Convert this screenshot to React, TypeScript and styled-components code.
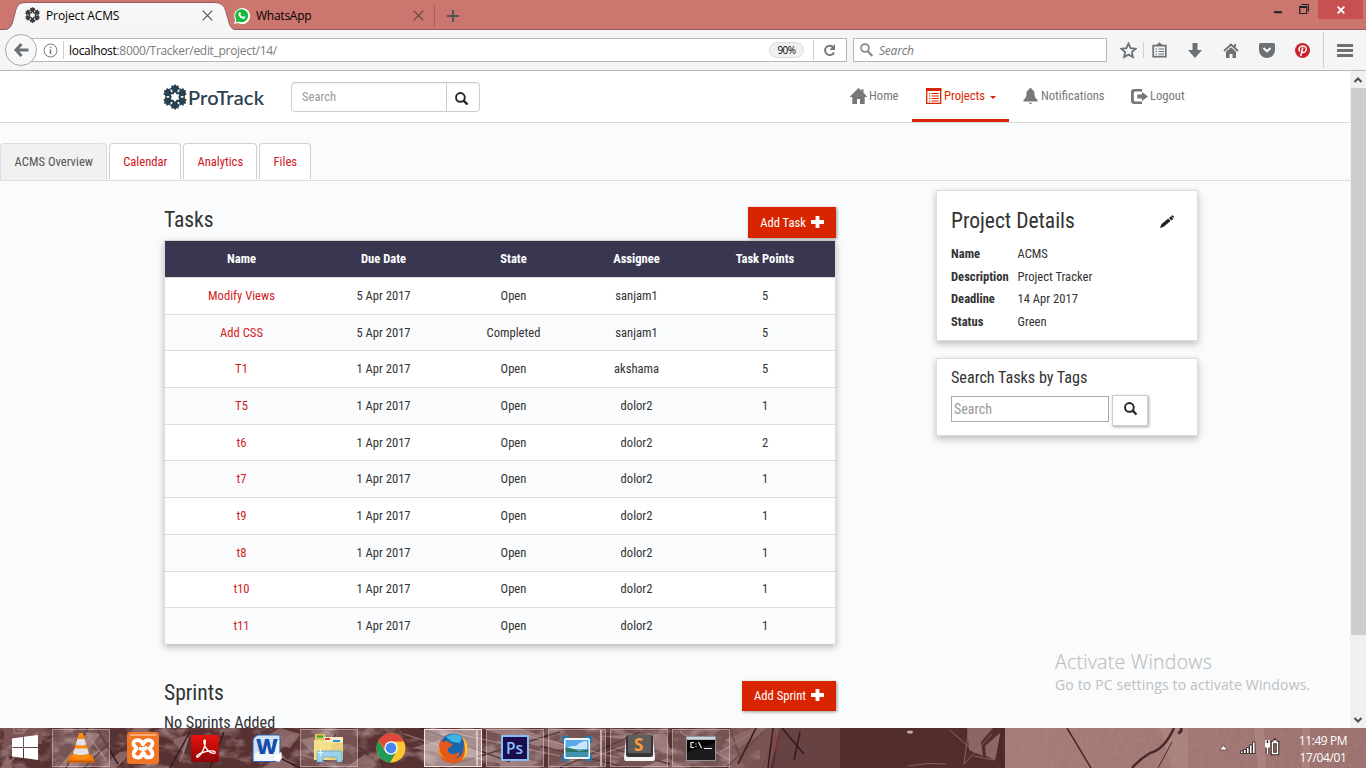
import React from 'react';
import styled, { createGlobalStyle, css } from 'styled-components';

const GlobalStyle = createGlobalStyle`
  *, *::before, *::after { box-sizing: border-box; }
  body { margin: 0; background: #fafbfd; overflow: hidden; }
`;

const condensed = css`font-family: 'Roboto Condensed', 'Roboto', sans-serif; font-stretch: condensed;`;
const system = css`font-family: 'Open Sans', 'Noto Sans', sans-serif; font-stretch: normal;`;

const Screen = styled.div`
  width: 1366px;
  height: 768px;
  display: grid;
  grid-template-rows: 30px 41px 657px 40px;
  overflow: hidden;
`;

/* ---------- Browser chrome ---------- */
const TitleBar = styled.header`
  ${system}
  position: relative;
  display: flex;
  align-items: flex-start;
  background: #cc7670;
  border-bottom: 1px solid #9c5960;
  font-size: 12px;
  color: #000;
`;
const TabShape = styled.svg`
  position: absolute;
  left: 0;
  top: 0;
`;
const BrowserTab = styled.div<{ $w: number; $pl: number }>`
  position: relative;
  display: flex;
  align-items: center;
  width: ${p => p.$w}px;
  height: 31px;
  padding-left: ${p => p.$pl}px;
`;
const TabLabel = styled.span<{ $w: number; $ml: number; $ls?: number }>`
  width: ${p => p.$w}px;
  margin-left: ${p => p.$ml}px;
  letter-spacing: ${p => p.$ls || 0}px;
  white-space: nowrap;
`;
const NewTab = styled.div`
  display: flex;
  align-items: center;
  height: 22px;
  margin-top: 5px;
  padding-left: 12px;
  border-left: 1px solid #a9605f;
`;
const WindowButtons = styled.div`
  display: flex;
  margin-left: auto;
  margin-right: 3px;
`;
const CloseWindow = styled.div`
  width: 45px;
  height: 19px;
  margin-left: 9px;
  background: #c75050;
  display: flex;
  align-items: center;
  justify-content: center;
`;
const Toolbar = styled.div`
  ${system}
  display: flex;
  align-items: center;
  background: #f5f5f5;
  border-bottom: 1px solid #b9b9b9;
  padding-left: 5px;
  font-size: 12px;
`;
const BackButton = styled.div`
  position: relative;
  z-index: 1;
  width: 32px;
  height: 32px;
  border: 1px solid #a2abb5;
  border-radius: 50%;
  background: #f8f8f8;
  display: flex;
  align-items: center;
  justify-content: center;
`;
const Field = styled.div<{ $w: number; $ml: number; $pl: number }>`
  display: flex;
  align-items: center;
  width: ${p => p.$w}px;
  height: 24px;
  margin-left: ${p => p.$ml}px;
  padding-left: ${p => p.$pl}px;
  background: #fff;
  border: 1px solid #b1bac4;
`;
const Divider = styled.i<{ $h: number; $ml: number; $mr?: number }>`
  width: 1px;
  height: ${p => p.$h}px;
  margin-left: ${p => p.$ml}px;
  margin-right: ${p => p.$mr || 0}px;
  background: #cfcfcf;
`;
const Url = styled.span`
  width: 700px;
  color: #7c7c7c;
  letter-spacing: -0.31px;
  b { font-weight: 400; color: #000; }
`;
const ZoomBadge = styled.span`
  flex: none;
  width: 35px;
  height: 16px;
  border: 1px solid #dcdcdc;
  border-radius: 8px;
  background: #f0f0f0;
  font-size: 10px;
  line-height: 14px;
  letter-spacing: -0.5px;
  text-align: center;
  color: #000;
`;
const SearchHint = styled.em`
  margin-left: 6px;
  color: #757575;
  letter-spacing: -0.2px;
`;
const ToolIcons = styled.div`
  display: flex;
  align-items: center;
  margin-left: 12px;
`;
const ToolIcon = styled.span<{ $w?: number }>`
  width: ${p => p.$w || 36}px;
  height: 18px;
  display: flex;
  align-items: center;
  justify-content: center;
`;

/* ---------- Page ---------- */
const Viewport = styled.div`
  display: grid;
  grid-template-columns: 1350px 16px;
  overflow: hidden;
`;
const Page = styled.div`
  ${condensed}
  position: relative;
  background: #fafbfd;
  color: #333;
  font-size: 12.6px;
  overflow: hidden;
`;
const Navbar = styled.nav`
  display: flex;
  height: 52px;
  padding-left: 163px;
  background: #fff;
  border-bottom: 1px solid #d9d9d9;
`;
const Brand = styled.div`
  display: flex;
  align-items: center;
  width: 128px;
  height: 52px;
  font: 500 20px/24px Lato, sans-serif;
  font-stretch: normal;
  color: #284050;
  span { margin: -1px 0 0 1px; letter-spacing: 0.2px; -webkit-text-stroke: 0.1px #284050; }
`;
const NavSearch = styled.div`
  display: flex;
  width: 189px;
  height: 30px;
  margin-top: 11px;
  border: 1px solid #ccc;
  border-radius: 3.6px;
  color: #999;
  line-height: 28px;
  box-shadow: inset 0 1px 1px rgba(0, 0, 0, 0.06);
`;
const NavSearchInput = styled.span`
  width: 155px;
  padding-left: 10px;
  border-right: 1px solid #ccc;
`;
const NavSearchButton = styled.span`
  display: flex;
  flex: 1;
  align-items: center;
  justify-content: center;
  padding: 3px 2px 0 0;
`;
const NavLinks = styled.div`
  display: flex;
  margin-left: 357px;
`;
const NavLink = styled.a<{ $w: number; $pl?: number; $active?: boolean }>`
  display: flex;
  align-items: center;
  width: ${p => p.$w}px;
  height: 51px;
  padding-left: ${p => p.$pl ?? 13}px;
  padding-top: ${p => (p.$active ? 3 : 0)}px;
  border-bottom: ${p => (p.$active ? '3px solid #d92400' : '0')};
  color: ${p => (p.$active ? '#d92400' : '#777')};
  svg { flex: none; margin-top: -1px; }
  span { margin: -2px 0 0 2px; }
`;
const Caret = styled.i`
  margin: 2px 0 0 5px;
  border: 3.5px solid transparent;
  border-top-color: #d92400;
  border-bottom: 0;
`;
const PageTabs = styled.div`
  display: flex;
  gap: 2px;
  height: 58px;
  padding-top: 20px;
  border-bottom: 1px solid #ddd;
`;
const PageTab = styled.a<{ $w: number; $active?: boolean }>`
  width: ${p => p.$w}px;
  height: ${p => (p.$active ? 37 : 36)}px;
  border: 1px solid ${p => (p.$active ? '#ddd' : '#d3d0d0')};
  border-bottom: 0;
  border-radius: 4px 4px 0 0;
  background: ${p => (p.$active ? '#f1f1f1' : '#fff')};
  color: ${p => (p.$active ? '#555' : '#d0141e')};
  line-height: 36px;
  padding-left: 0.6px;
  text-align: center;
`;
const Columns = styled.div`
  display: flex;
  padding-left: 164px;
`;
const MainColumn = styled.main`
  width: 672px;
  padding-top: 26px;
`;
const SectionHead = styled.div`
  display: flex;
  align-items: flex-start;
  justify-content: space-between;
`;
const Heading = styled.h3`
  margin: 0;
  font-size: 21.6px;
  font-weight: 400;
  line-height: 26px;
  letter-spacing: -0.04px;
`;
const SubHeading = styled.h4`
  margin: 0;
  font-size: 16.2px;
  font-weight: 400;
  line-height: 20px;
  letter-spacing: -0.03px;
`;
const AddButton = styled.button<{ $w: number; $h?: number }>`
  ${condensed}
  display: flex;
  align-items: center;
  justify-content: center;
  gap: 5px;
  width: ${p => p.$w}px;
  height: ${p => p.$h || 31}px;
  padding: 0;
  border: 0;
  background: #d92400;
  color: #fff;
  font-size: 12.6px;
  box-shadow: 1px 1px 3px rgba(0, 0, 0, 0.4);
  svg { margin-top: -1px; }
`;
const TaskTable = styled.table`
  width: 672px;
  margin-top: 2px;
  table-layout: fixed;
  border-collapse: separate;
  border-spacing: 0;
  text-align: center;
  box-shadow: 0 3px 7px rgba(0, 0, 0, 0.27);
  border: 1px solid #ddd;
  border-top-color: #d5d5d8;
  border-bottom: 0;
`;
const HeadCell = styled.th<{ $w: number }>`
  width: ${p => p.$w}px;
  height: 36px;
  padding: 0 0 2px;
  background: #39374f;
  color: #fff;
  font-weight: 700;
`;
const Cell = styled.td<{ $color?: string }>`
  height: 36.7px;
  padding: 0 0 1px;
  border-top: 1px solid #ddd;
  color: ${p => p.$color || '#333'};
`;
const BodyRow = styled.tr`
  background: #fff;
  &:nth-child(even) { background: #fafbfd; }
`;
const Sprints = styled.section`
  margin-top: 37px;
  ${Heading} { line-height: 24px; }
  ${SubHeading} { margin-top: 2px; }
`;
const Sidebar = styled.aside`
  width: 262px;
  margin-left: 100px;
  padding-top: 9px;
`;
const Panel = styled.section<{ $h: number; $pt: number }>`
  height: ${p => p.$h}px;
  margin-bottom: 17px;
  padding: ${p => p.$pt}px 14px 0;
  background: #fff;
  border: 1px solid #ddd;
  box-shadow: 0 3px 7px rgba(0, 0, 0, 0.25);
`;
const PanelHead = styled.div`
  display: flex;
  align-items: center;
  justify-content: space-between;
  padding-right: 9px;
`;
const Details = styled.dl`
  display: grid;
  grid-template-columns: 66.5px 1fr;
  grid-auto-rows: 22.6px;
  align-items: center;
  margin: 8.2px 0 0;
  dt { font-weight: 700; }
  dd { margin: 0; }
`;
const TagSearch = styled.div`
  display: flex;
  gap: 3px;
  margin-top: 7px;
`;
const TagInput = styled.div`
  width: 158px;
  height: 26px;
  margin-top: 1px;
  padding-left: 2px;
  border: 1px solid #a9a9a9;
  color: #999;
  font-size: 14px;
  line-height: 24px;
`;
const TagButton = styled.div`
  display: flex;
  align-items: center;
  justify-content: center;
  width: 36px;
  height: 31px;
  padding: 0 0 3px 1px;
  border: 1px solid #ccc;
  background: #fff;
  box-shadow: 1px 1px 3px rgba(0, 0, 0, 0.35);
`;
const Watermark = styled.div`
  ${system}
  position: absolute;
  left: 1055px;
  top: 577px;
  color: #bdbfc0;
  white-space: nowrap;
`;
const WatermarkTitle = styled.div`
  font-size: 19.5px;
  line-height: 28px;
  font-weight: 300;
  letter-spacing: 0.25px;
  -webkit-text-stroke: 0.2px #bdbfc0;
`;
const WatermarkText = styled.div`
  font-size: 14px;
  line-height: 18px;
  letter-spacing: 0.16px;
`;
const Scrollbar = styled.div`
  display: flex;
  flex-direction: column;
  align-items: center;
  background: #f0f0f0;
`;
const Thumb = styled.div`
  width: 15px;
  height: 547px;
  margin-bottom: auto;
  background: #cdcdcd;
`;
const Arrow = styled.svg`
  width: 16px;
  height: 17px;
  flex: none;
`;

/* ---------- Taskbar ---------- */
const TaskbarRoot = styled.footer`
  ${system}
  position: relative;
  display: flex;
  overflow: hidden;
  background: #5a3535;
  color: #fff;
`;
const Wallpaper = styled.svg`
  position: absolute;
  inset: 0;
`;
const StartButton = styled.div`
  position: relative;
  width: 50px;
  padding: 7px 0 0 12px;
`;
const AppButton = styled.div<{ $state?: 'open' | 'active' }>`
  position: relative;
  width: 58px;
  height: 38px;
  margin: 1px 2px;
  display: flex;
  align-items: center;
  justify-content: center;
  border: 1px solid ${p => (p.$state === 'active' ? '#eee4e4' : p.$state ? 'rgba(235,215,215,.45)' : 'transparent')};
  background: ${p => (p.$state === 'active' ? 'rgba(255,245,245,.45)' : p.$state ? 'rgba(235,215,215,.2)' : 'transparent')};
`;
const StackEdge = styled.i`
  position: absolute;
  right: 3px;
  top: 0;
  bottom: 0;
  border-left: 2px solid rgba(240, 225, 225, 0.6);
`;
const Tray = styled.div`
  position: relative;
  display: flex;
  margin-left: auto;
  align-items: center;
`;
const Clock = styled.div`
  width: 86px;
  padding-top: 1px;
  font-size: 12px;
  line-height: 17px;
  letter-spacing: -0.4px;
  text-align: center;
`;

/* ---------- Icons ---------- */
const Snowflake = ({ size, color }: { size: number; color: string }) => (
  <svg width={size} height={size * 1.08} viewBox="0 0 24 26" fill={color}>
    <path d="M12 5.500l2.200 3.800h4.300L16.400 13l2.100 3.700h-4.300L12 20.500l-2.200-3.800H5.500L7.600 13 5.500 9.300h4.300z" fill="none" stroke={color} strokeWidth="2" />
    {[0, 60, 120, 180, 240, 300].map(a => (
      <path key={a} transform={`rotate(${a} 12 13)`} d="M12 0l1.400 1.700 2.300-.3-.1 2 1.500 1.300-2.100 1.400L13.800 8.500h-3.600L9 6.100 6.900 4.700l1.500-1.300-.1-2 2.300.3z" />
    ))}
  </svg>
);
const CrossIcon = ({ color = '#555', size = 11 }: { color?: string; size?: number }) => (
  <svg width={size} height={size} viewBox="0 0 11 11" stroke={color} strokeWidth="1.2"><path d="M.7.7l9.6 9.6M10.3.7L.7 10.3" /></svg>
);
const SearchGlyph = ({ size = 13.5, color = '#222' }: { size?: number; color?: string }) => (
  <svg width={size} height={size} viewBox="0 0 13 13" fill="none" stroke={color}>
    <circle cx="5.2" cy="5.2" r="4.2" strokeWidth="1.8" /><path d="M8.3 8.3l3.800 3.800" strokeWidth="2.2" />
  </svg>
);
const PlusGlyph = () => <svg width="13" height="12" viewBox="0 0 13 12"><path d="M4.600 0h3.800v4.100H13v3.800H8.400V12H4.600V7.900H0V4.100h4.600z" fill="#fff" /></svg>;
const HomeGlyph = () => (
  <svg width="17" height="16" viewBox="0 0 17 16" fill="#777"><path d="M8.500 0l3 2.800V1.200h2v3.500L17 8.600V9h-2.300v7H10v-5H7v5H2.300V9H0v-.4z" /></svg>
);
const ListGlyph = () => (
  <svg width="16" height="16" viewBox="0 0 16 16"><path d="M.7.7h14v14.600H.7z" fill="#fff" stroke="#d92400" strokeWidth="1.3" /><path d="M0 0h15.300v3H0z" fill="#d92400" />
    <path d="M3 5.500h1.300M5.500 5.500h7.300M3 8h1.300M5.500 8h7.300M3 10.500h1.300M5.500 10.500h7.300M3 13h1.300M5.500 13h7.300" stroke="#d92400" strokeWidth="1.2" /></svg>
);
const BellGlyph = () => (
  <svg width="17" height="16" viewBox="-.500 0 17 16" fill="#777"><path d="M7.200 0h1.600l.5 1.600C11.500 2.200 12 4 12 5.800c0 3.200 1.100 4.600 3 6V13.400H1V11.800c1.900-1.400 3-2.800 3-6C4 4 4.500 2.200 6.700 1.600zM6.300 14.700h3.400L8.600 16H7.400z" /></svg>
);
const LogoutGlyph = () => (
  <svg width="17" height="15" viewBox="0 0 17 15" fill="#777"><path d="M11 0v2.500H4.500Q2.800 2.500 2.800 4v7q0 1.500 1.700 1.500H11V15H3Q0 15 0 12V3Q0 0 3 0zM11 3l6 4.500-6 4.500V9.600H6.200V5.400H11z" /></svg>
);
const PencilGlyph = () => (
  <svg width="14" height="13" viewBox="0 0 14 13" fill="#222"><path d="M0 13l1.300-3.800 6.900-5.700 2.300 2.500-6.800 5.700zM9 2.900L10.900 1.300 13.300 3.700 11.300 5.400zM11.600.8q.6-.9 1.600 0 1.100 1 .6 1.800l-.4.5L11.200 1.200z" /></svg>
);

/* ---------- Taskbar pictures ---------- */
const WallpaperArt = () => (
  <Wallpaper width="1366" height="40" viewBox="0 0 1366 40">
    <defs>
      <linearGradient id="wall"><stop offset="0" stopColor="#a57c78" /><stop offset=".5" stopColor="#a27874" /><stop offset="1" stopColor="#9c716e" /></linearGradient>
      <filter id="grain" x="0" y="0" width="100%" height="100%"><feTurbulence type="fractalNoise" baseFrequency=".05 .09" numOctaves="3" seed="7" /><feColorMatrix values="0 0 0 0 .72 0 0 0 0 .55 0 0 0 0 .54 2.600 0 0 0 -1.200" /></filter>
      <filter id="speckle" x="0" y="0" width="100%" height="100%"><feTurbulence type="fractalNoise" baseFrequency=".2" numOctaves="2" seed="3" /><feColorMatrix values="0 0 0 0 .45 0 0 0 0 .3 0 0 0 0 .29 1.500 0 0 0 -.65" /></filter>
    </defs>
    <rect width="840" height="40" fill="#583233" />
    <rect width="760" height="40" filter="url(#grain)" opacity=".55" />
    <path d="M4 0h38v16H4z" fill="#7c5454" />
    <path d="M14 0v5h10V0M18 0v2h9V0" fill="none" stroke="#a98987" />
    <g fill="#94706f" opacity=".8">
      <path d="M0 40l8-14 4 14zM58 40l30-36 12 2-24 34zM100 40l20-16 14-2-18 18zM134 0l-8 12 26-12zM280 0l-20 12 30 8 10-14zM262 40l20-14 12 14zM300 12l18 18 8-24zM190 6l-18 6 12 14zM345 40l20-14 12 10-6 4zM412 20l28-8 100 22-14 6zM480 0l70 22 24-2-54-20zM500 30l26 4 14 6h-40zM596 8l70-2 6 22-40-16zM640 40l28-10 18 10zM725 12l28-12h14l-28 20z" />
    </g>
    <g stroke="#351c1e" strokeWidth="1.5" fill="none">
      <path d="M66 40L88 0M84 40L110 14M118 36L98 2M170 40l20-36M210 40l14-36M260 20l40 20M318 36l18-30M420 0l90 34M440 40l120-36M540 18l80 20M560 40l80-36M610 20l60 16M726 40l38-36M730 0l10 30M762 40l14-32" />
    </g>
    <g stroke="#b08c89" strokeWidth="1.2" fill="none" opacity=".7">
      <path d="M10 34L38 4M70 38l22-32M106 32L86 4M180 34l8-24M256 30l26-22M300 26l30 10M404 6l80 26M430 0l130 28M520 6l100 24M590 30l70-24M680 4l50 28M720 24l30-18" />
    </g>
    <path d="M730 0h50l-10 40h-40z" fill="#8f6a69" opacity=".6" />
    <path d="M780 0h60v40h-66z" fill="#7b5655" opacity=".45" />
    <path d="M773 0l-5 40M782 0l22 26M756 0l-18 36M800 4l-6 28" stroke="#351d1f" strokeWidth="1.6" fill="none" />
    <path d="M772 4l6 10-4 10" stroke="#92383c" strokeWidth="5" opacity=".4" fill="none" />
    <path d="M840 0h165v40H840z" fill="#522d2e" />
    <path d="M967 0h26l-12 14 2 14-14-6zM985 18l16-14-6 28-9-4z" fill="#8c6564" />
    <path d="M950 2l20 18M968 6l-4 30 28-30M908 38q20-4 38-2M974 28l20 4" stroke="#9c7775" fill="none" opacity=".7" />
    <ellipse cx="910" cy="4" rx="3" ry="1.5" fill="#c7a9a6" />
    <rect x="1005" width="361" height="40" fill="url(#wall)" />
    <path d="M1160 0h28v40h-16z" fill="#ad8581" opacity=".8" />
    <path d="M1254 0h10l2 40h-8zM1302 0h8v40h-8z" fill="#b58e8a" opacity=".5" />
    <rect x="1005" width="361" height="40" filter="url(#speckle)" opacity=".35" />
    <g fill="none" stroke="#4b292b"><path d="M1067 0l24 40" strokeWidth="1.5" /><path d="M1174 0q-10 22-24 25-10 6-18 15" strokeWidth="2.5" /><path d="M1172 14l-14 26" /><path d="M1178 5q4-1 3-5" strokeWidth="3" /></g>
    <path d="M1003 0l-3 20 3 20" stroke="#4b292b" strokeWidth="4" fill="none" />
  </Wallpaper>
);
const VlcIcon = () => (
  <svg width="28" height="32" viewBox="0 0 28 32"><path d="M3 23h22l3 7.500H0z" fill="#f57d07" /><path d="M0 28.500h28v2H0z" fill="#c95b02" /><path d="M12 1h4l7 24q-9 5-18 0z" fill="#f98c13" /><path d="M10.500 7h7l1.600 5.500q-5 2-10.200 0zM7.700 16.500h12.600l1.500 5q-8 3-15.600 0z" fill="#e3e4e7" /></svg>
);
const XamppIcon = () => (
  <svg width="32" height="32" viewBox="0 0 32 32"><rect width="32" height="32" rx="3" fill="#ef7624" /><path d="M3 2h26v2H3z" fill="#f9ad79" /><path d="M16 12.500C14 6.500 6 7 6.500 12 7 15 9.500 15 9.500 16.500 9.500 18 6 19 6.500 22 7.500 27 14 26.500 15 22.500 15.500 20.500 17 20.500 17.500 22.500 19 26.500 25 26.500 25.500 22 26 19 22.800 18 22.800 16.500 22.800 15 25 15 25.500 12 26 7 18 6.500 16 12.500zM13.500 16.800q3 1 5.500-.8" fill="none" stroke="#fff" strokeWidth="3.8" strokeLinejoin="round" strokeLinecap="round" /></svg>
);
const AcrobatIcon = () => (
  <svg width="28" height="27" viewBox="0 0 28 27"><defs><linearGradient id="acro" x2="0" y2="1"><stop stopColor="#e8130f" /><stop offset="1" stopColor="#8f0508" /></linearGradient></defs><rect width="28" height="27" fill="url(#acro)" /><path d="M13.800 4.800c-2 0-.6 6.500 3 10.500 2.600 2.900 7.200 4 7.400 2.200.2-1.900-5.200-2-9.700-.9C9.500 18 5.500 20.200 5.600 21.800c.7 1.600 4.400-1.800 6.600-6.800 2.100-4.700 2.700-10.200 1.600-10.200z" fill="none" stroke="#fff" strokeWidth="1.3" /></svg>
);
const Label = styled.text<{ $size: number; $weight?: number }>`
  font-family: 'Open Sans', sans-serif;
  font-size: ${p => p.$size}px;
  font-weight: ${p => p.$weight || 700};
`;
const WordIcon = () => (
  <svg width="30" height="29" viewBox="0 0 30 29"><path d="M6 1h22v26.500H1V6q1-4 5-5z" fill="#cfe1f6" stroke="#2c62a8" /><path d="M2 20L27 6v21H2z" fill="#f1f6fc" /><Label x="4" y="20" $size={21} $weight={800} fill="#1450a8">W</Label><path d="M22 18l4 2.500 3-2.500 1 6-3 4-6-2z" fill="#fff" stroke="#c4d5ea" strokeWidth=".5" /></svg>
);
const ExplorerIcon = () => (
  <svg width="34" height="30" viewBox="0 0 34 30"><path d="M3 1h10l1 3h17v23H3z" fill="#dbc25c" /><path d="M5 2.500h6v2H5z" fill="#25a83a" /><path d="M12 4h19v5H12z" fill="#f5ecc4" /><path d="M13 5h5v2h-5z" fill="#d5402e" /><path d="M21 7h7v2h-7z" fill="#2f8ee0" /><path d="M2 7h9l2 2h18v18H2z" fill="#f3df8c" /><path d="M20 10h11v17H17z" fill="#ead27c" /><path d="M5 29V20q0-2 2-2h21q2 0 2 2v9h-5v-5H11v5z" fill="#9bd3ec" stroke="#5b9fc8" strokeWidth=".7" /><path d="M8.500 14l.8 4.700 3 .8-3 .8-.8 3.700-.8-3.700-3-.8 3-.8z" fill="#fff" opacity=".8" /></svg>
);
const ChromeIcon = () => (
  <svg width="30" height="30" viewBox="0 0 30 30"><circle cx="15" cy="15" r="14.500" fill="#fbc831" /><path d="M2.500 7.600A14.500 14.500 0 0 0 14 29.500l6.500-11L9 18z" fill="#219a55" /><path d="M2.500 7.600A14.500 14.500 0 0 1 28 8.500H15L9 17z" fill="#e0473b" /><circle cx="15" cy="15" r="6.700" fill="#fff" /><circle cx="15" cy="15" r="5.400" fill="#4786f0" /></svg>
);
const FirefoxIcon = () => (
  <svg width="30" height="31" viewBox="0 0 30 31"><circle cx="15.500" cy="14" r="13.500" fill="#1766ae" /><path d="M8 4Q16-2 24 4l-2 6-8-1z" fill="#3fb2e2" /><path d="M24 3.500q6 5 5.500 13Q28 29.500 15 30.500 2 29.500.7 18 .3 10 4 5.500L4.500 9l4.500-1.200Q11 10 14.500 11q.5 2-3.500 3.500-2 2-.5 4.500 3 3.500 7.500 1.500 3-2 4 0-1.500 3.500-5 4.500 7-.5 8.500-8Q26.500 9 24 3.500z" fill="#e25a1c" /><path d="M24 3.500q6 5 5.500 13-.5 7-5.500 10.500Q27.500 22 27 15q-.5-7-3-11.500z" fill="#fdcb33" /><path d="M2 12q-1 9 6 14-9-3-7.300-10z" fill="#f38b22" /></svg>
);
const PhotoshopIcon = () => (
  <svg width="28" height="26" viewBox="0 0 28 26"><rect x="1" y="1" width="26" height="24" fill="#1a0e4c" stroke="#85bdf6" strokeWidth="2" /><Label x="5" y="19" $size={15.5} $weight={600} fill="#85c0fa">Ps</Label></svg>
);
const PictureIcon = () => (
  <svg width="30" height="25" viewBox="0 0 30 25"><path d="M0 0h7v3H3v4H0zM23 0h7v7h-3V3h-4zM0 18h3v4h4v3H0zM27 18h3v7h-7v-3h4z" fill="#2878ae" /><rect x="2" y="2" width="26" height="21" rx="2" fill="#f3f6f8" /><path d="M3.500 4h23v10h-23z" fill="#58a9ec" /><path d="M5 12q5-3 9-2 5-5 11-5v8H4z" fill="#c9e6f8" /><path d="M3.500 11.500l6 1 7 2 10-1v3h-23z" fill="#2f7560" /><path d="M3.500 16h23v5h-23z" fill="#4293ac" /></svg>
);
const SublimeIcon = () => (
  <svg width="31" height="28" viewBox="0 0 31 28"><path d="M2 4h27l2 20q0 3-2 3H2q-2 0-2-3z" fill="#f4f3f1" /><rect x="2" y="1" width="27" height="22" rx="2.500" fill="#353535" /><path d="M4 1h23v18H4z" fill="#5d5d5d" /><Label x="10" y="16.500" $size={17} fill="#fb9a35">S</Label></svg>
);
const ConsoleIcon = () => (
  <svg width="30" height="25" viewBox="0 0 30 25"><rect width="30" height="25" fill="#8f9498" /><path d="M1 1h28v2.500H1z" fill="#cbd5e2" /><path d="M1 4h28v20H1z" fill="#050505" /><path d="M1 16l28-9v17H1z" fill="#1b1b1b" /><path d="M8 6.500H5v5h3M10 7.500v1M10 10v1M12.500 6l3 6M18 12.500h8" stroke="#eee" strokeWidth="1.2" fill="none" /></svg>
);

const tasks: [string, string, string, string, number][] = [
  ['Modify Views', '5 Apr 2017', 'Open', 'sanjam1', 5],
  ['Add CSS', '5 Apr 2017', 'Completed', 'sanjam1', 5],
  ['T1', '1 Apr 2017', 'Open', 'akshama', 5],
  ['T5', '1 Apr 2017', 'Open', 'dolor2', 1],
  ['t6', '1 Apr 2017', 'Open', 'dolor2', 2],
  ['t7', '1 Apr 2017', 'Open', 'dolor2', 1],
  ['t9', '1 Apr 2017', 'Open', 'dolor2', 1],
  ['t8', '1 Apr 2017', 'Open', 'dolor2', 1],
  ['t10', '1 Apr 2017', 'Open', 'dolor2', 1],
  ['t11', '1 Apr 2017', 'Open', 'dolor2', 1],
];
const linkColor = '#d2231a';
const columns: [string, number][] = [['Name', 153], ['Due Date', 131], ['State', 129], ['Assignee', 117], ['Task Points', 140]];

export default function App() {
  return (
    <Screen>
      <GlobalStyle />
      <TitleBar>
        <TabShape width="250" height="31" viewBox="0 0 250 31">
          <path d="M0 30.500C12 30.500 12 24 14.500 15S17 2.500 27 2.500H214C225 2.500 225 9 227.500 17S229 30.500 241 30.500z" fill="#f6f6f6" stroke="#9c5960" />
          <path d="M0 30h241v1H0z" fill="#f6f6f6" />
        </TabShape>
        <BrowserTab $w={234} $pl={25}>
          <Snowflake size={15} color="#3c3c3c" />
          <TabLabel $w={156} $ml={6} $ls={-0.12}>Project ACMS</TabLabel>
          <CrossIcon />
        </BrowserTab>
        <BrowserTab $w={200} $pl={0}>
          <svg width="16" height="16" viewBox="0 0 16 16"><path d="M0 16l1.200-4A8 8 0 1 1 4 14.900z" fill="#fff" /><path d="M1.600 14.400l.8-2.800A6.500 6.500 0 1 1 4.800 13.600z" fill="#17b93c" /><path d="M5.300 4.200q.8-.4 1.200.4l.5 1.200-.6 1q.7 1.500 2.300 2.100l.9-.8 1.700.8q0 2-2 2.100Q5 10 4.300 6q0-1.100 1-1.800z" fill="#fff" /></svg>
          <TabLabel $w={157} $ml={6} $ls={-0.25}>WhatsApp</TabLabel>
          <CrossIcon color="#69413f" />
        </BrowserTab>
        <NewTab><svg width="12" height="12" viewBox="0 0 12 12"><path d="M6 0v12M0 6h12" stroke="#555" strokeWidth="2" /></svg></NewTab>
        <WindowButtons>
          <svg width="35" height="19" viewBox="0 0 35 19" fill="none" stroke="#222"><path d="M0 12.200h8" strokeWidth="2" /><path d="M25.700 7.500h7v6h-7zM27.500 4.500h7v7" strokeWidth="1.2" /><path d="M25 7h8" strokeWidth="2" /></svg>
          <CloseWindow><svg width="8" height="8" viewBox="0 0 8 8"><path d="M.7.7l6.600 6.600M7.300.7L.7 7.300" stroke="#fff" strokeWidth="1.8" /></svg></CloseWindow>
        </WindowButtons>
      </TitleBar>

      <Toolbar>
        <BackButton><svg width="15" height="14" viewBox="0 0 15 14"><path d="M7.500 1L2 7l5.500 6M2 7h12.500" fill="none" stroke="#6c7176" strokeWidth="3" /></svg></BackButton>
        <Field $w={817} $ml={-7} $pl={12}>
          <svg width="15" height="15" viewBox="0 0 15 15"><circle cx="7.5" cy="7.5" r="6.5" fill="none" stroke="#777" /><path d="M7.500 6.500v4.500M7.500 3.800v1.500" stroke="#777" strokeWidth="1.5" /></svg>
          <Divider $h={18} $ml={5} $mr={5} />
          <Url><b>localhost</b>:8000/Tracker/edit_project/14/</Url>
          <ZoomBadge>90%</ZoomBadge>
          <Divider $h={20} $ml={9} $mr={9} />
          <svg width="13" height="13" viewBox="0 0 13 13"><path d="M10.500 3.500A4.700 4.700 0 1 0 11 8.500" fill="none" stroke="#777" strokeWidth="1.9" /><path d="M12 0v6H6.500z" fill="#777" /></svg>
        </Field>
        <Field $w={254} $ml={6} $pl={6}>
          <svg width="13" height="14" viewBox="0 0 13 14" fill="none" stroke="#8a8a8a"><circle cx="5" cy="5" r="3.900" strokeWidth="1.8" /><path d="M7.800 8.200l4.500 4.800" strokeWidth="2.3" /></svg>
          <SearchHint>Search</SearchHint>
        </Field>
        <ToolIcons>
          <ToolIcon $w={18}><svg width="17" height="17" viewBox="0 0 17 17"><path d="M8.500 1.500l2.100 4.600 5 .6-3.700 3.400 1 5-4.400-2.500-4.400 2.500 1-5L1.400 6.700l5-.6z" fill="none" stroke="#6c7176" strokeWidth="1.8" /></svg></ToolIcon>
          <Divider $h={16} $ml={6} $mr={-3} />
          <ToolIcon><svg width="15" height="16" viewBox="0 0 15 16"><path d="M1.200 3.700h12.600v11H1.200z" fill="none" stroke="#6c7176" strokeWidth="1.7" /><path d="M4 3.500L7.500.200 11 3.500z" fill="#6c7176" /><path d="M3.500 7h1.500M6.500 7h5.500M3.500 9.500h1.500M6.500 9.500h5.500M3.500 12h1.500M6.500 12h5.500" stroke="#6c7176" strokeWidth="1.1" /></svg></ToolIcon>
          <ToolIcon><svg width="14" height="15" viewBox="0 0 14 15"><path d="M4.500 0h5v7H14l-7 8-7-8h4.500z" fill="#6c7176" /></svg></ToolIcon>
          <ToolIcon><svg width="16" height="15" viewBox="0 0 16 15"><path d="M1 8l7-6.500L15 8M12 1v3" fill="none" stroke="#6c7176" strokeWidth="1.8" /><path d="M8 4.200l5 4.600V15H9.500v-4h-3v4H3V8.800z" fill="#6c7176" /></svg></ToolIcon>
          <ToolIcon><svg width="16" height="15" viewBox="0 0 16 15"><path d="M1.500 0h13Q16 0 16 1.500V7a8 8 0 0 1-16 0V1.500Q0 0 1.500 0z" fill="#6c7176" /><path d="M4.500 5L8 8.300 11.500 5" fill="none" stroke="#fff" strokeWidth="2" /></svg></ToolIcon>
          <ToolIcon $w={35}><svg width="15" height="15" viewBox="0 0 15 15"><circle cx="7.5" cy="7.5" r="7.5" fill="#c8232c" /><path d="M7.800 4.500L5.700 13M4.800 8.300C2.600 5 5.500 3 7.800 3c3 0 4 2.200 3.200 4.400-.8 2.400-3.300 2.600-4 1.200" fill="none" stroke="#fff" strokeWidth="1.4" /></svg></ToolIcon>
          <Divider $h={36} $ml={3} $mr={13} />
          <svg width="16" height="13" viewBox="0 0 16 13"><path d="M0 1.500h16M0 6.500h16M0 11.500h16" stroke="#6c7176" strokeWidth="2.8" /></svg>
        </ToolIcons>
      </Toolbar>

      <Viewport>
        <Page>
          <Navbar>
            <Brand><Snowflake size={24} color="#284050" /><span>ProTrack</span></Brand>
            <NavSearch>
              <NavSearchInput>Search</NavSearchInput>
              <NavSearchButton><SearchGlyph /></NavSearchButton>
            </NavSearch>
            <NavLinks>
              <NavLink $w={75}><HomeGlyph /><span>Home</span></NavLink>
              <NavLink $w={97} $pl={14} $active><ListGlyph /><span>Projects</span><Caret /></NavLink>
              <NavLink $w={109}><BellGlyph /><span>Notifications</span></NavLink>
              <NavLink $w={80}><LogoutGlyph /><span>Logout</span></NavLink>
            </NavLinks>
          </Navbar>
          <PageTabs>
            <PageTab $w={107} $active>ACMS Overview</PageTab>
            <PageTab $w={72}>Calendar</PageTab>
            <PageTab $w={74}>Analytics</PageTab>
            <PageTab $w={52}>Files</PageTab>
          </PageTabs>
          <Columns>
            <MainColumn>
              <SectionHead><Heading>Tasks</Heading><AddButton $w={88}>Add Task <PlusGlyph /></AddButton></SectionHead>
              <TaskTable>
                <thead><tr>{columns.map(([name, w]) => <HeadCell key={name} $w={w}>{name}</HeadCell>)}</tr></thead>
                <tbody>
                  {tasks.map(([name, due, state, who, points]) => (
                    <BodyRow key={name}>
                      <Cell $color={linkColor}>{name}</Cell><Cell>{due}</Cell><Cell>{state}</Cell><Cell>{who}</Cell><Cell>{points}</Cell>
                    </BodyRow>
                  ))}
                </tbody>
              </TaskTable>
              <Sprints>
                <SectionHead><Heading>Sprints</Heading><AddButton $w={94} $h={30}>Add Sprint <PlusGlyph /></AddButton></SectionHead>
                <SubHeading>No Sprints Added</SubHeading>
              </Sprints>
            </MainColumn>
            <Sidebar>
              <Panel $h={151} $pt={17}>
                <PanelHead><Heading>Project Details</Heading><PencilGlyph /></PanelHead>
                <Details>
                  <dt>Name</dt><dd>ACMS</dd>
                  <dt>Description</dt><dd>Project Tracker</dd>
                  <dt>Deadline</dt><dd>14 Apr 2017</dd>
                  <dt>Status</dt><dd>Green</dd>
                </Details>
              </Panel>
              <Panel $h={78} $pt={9}>
                <SubHeading>Search Tasks by Tags</SubHeading>
                <TagSearch><TagInput>Search</TagInput><TagButton><SearchGlyph /></TagButton></TagSearch>
              </Panel>
            </Sidebar>
          </Columns>
          <Watermark>
            <WatermarkTitle>Activate Windows</WatermarkTitle>
            <WatermarkText>Go to PC settings to activate Windows.</WatermarkText>
          </Watermark>
        </Page>
        <Scrollbar>
          <Arrow viewBox="0 0 16 17"><path d="M4.500 11L8 7.500l3.500 3.500" fill="none" stroke="#505050" strokeWidth="2" /></Arrow>
          <Thumb />
          <Arrow viewBox="0 0 16 17"><path d="M4.500 7L8 10.500 11.500 7" fill="none" stroke="#505050" strokeWidth="2" /></Arrow>
        </Scrollbar>
      </Viewport>

      <TaskbarRoot>
        <WallpaperArt />
        <StartButton><svg width="26" height="25" viewBox="0 0 26 25" fill="#fff"><path d="M0 3.500L11 2v10H0zM12 1.800L26 0v12H12zM0 13h11v10L0 21.500zM12 13h14v12l-14-1.900z" /></svg></StartButton>
        <AppButton $state="open"><VlcIcon /></AppButton>
        <AppButton><XamppIcon /></AppButton>
        <AppButton><AcrobatIcon /></AppButton>
        <AppButton><WordIcon /></AppButton>
        <AppButton $state="open"><ExplorerIcon /></AppButton>
        <AppButton><ChromeIcon /></AppButton>
        <AppButton $state="active"><FirefoxIcon /><StackEdge /></AppButton>
        <AppButton $state="open"><PhotoshopIcon /></AppButton>
        <AppButton $state="open"><PictureIcon /><StackEdge /></AppButton>
        <AppButton $state="open"><SublimeIcon /></AppButton>
        <AppButton $state="open"><ConsoleIcon /></AppButton>
        <Tray>
          <svg width="61" height="20" viewBox="0 0 61 20">
            <path d="M.500 12l4-4.500 4 4.500z" fill="#fff" stroke="#4b2f2f" strokeWidth=".7" />
            <g fill="#fff" stroke="#2c1c1c" strokeWidth=".8"><path d="M21.500 13h2.500v2.500h-2.500zM24.500 11.500H27v4h-2.500zM27.500 9.500H30v6h-2.500zM30.500 7H33v8.500h-2.500zM33.500 4H36v11.500h-2.500z" /></g>
            <g fill="none" stroke="#2c1c1c" strokeWidth="3.5"><path d="M53.500 4.500h5v11h-5zM54.500 2.500h3M46.500 4.500h4M48.500 9v7" /></g>
            <g fill="none" stroke="#fff" strokeWidth="1.5"><path d="M53.500 4.500h5v11h-5zM54.500 3h3M47 2v3M50 2v3M48.500 9v7" /></g>
            <path d="M46 5h5v4l-2 1h-1l-2-1z" fill="#fff" />
          </svg>
          <Clock>11:49 PM<br />17/04/01</Clock>
        </Tray>
      </TaskbarRoot>
    </Screen>
  );
}
